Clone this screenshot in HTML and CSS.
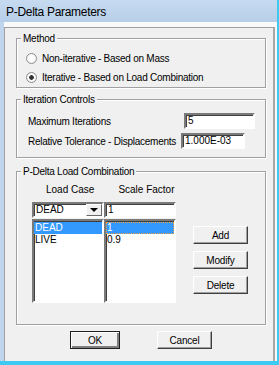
FILE: index.html
```html
<!DOCTYPE html>
<html lang="en">
<head>
    <meta charset="UTF-8">
    <title>P-Delta Parameters</title>
    <link rel="stylesheet" href="styles.css">
</head>
<body>
    <div class="window">
        <div class="titlebar">P-Delta Parameters</div>
        <div class="client">
            <div class="panel">
                <div class="group group-method">
                    <span class="group-title">Method</span>
                    <div class="radio-row">
                        <span class="radio"></span>
                        <span>Non-iterative - Based on Mass</span>
                    </div>
                    <div class="radio-row">
                        <span class="radio checked"></span>
                        <span>Iterative - Based on Load Combination</span>
                    </div>
                </div>

                <div class="group group-iter">
                    <span class="group-title">Iteration Controls</span>
                    <div class="field-row">
                        <span class="lbl lbl-max">Maximum Iterations</span>
                        <span class="textbox tb-max">5</span>
                    </div>
                    <div class="field-row">
                        <span class="lbl lbl-tol">Relative Tolerance - Displacements</span>
                        <span class="textbox tb-tol">1.000E-03</span>
                    </div>
                </div>

                <div class="group group-combo">
                    <span class="group-title">P-Delta Load Combination</span>
                    <div class="combo-layout">
                        <div class="combo-left">
                            <div class="col-heads">
                                <span class="head-case">Load Case</span>
                                <span class="head-scale">Scale Factor</span>
                            </div>
                            <div class="edit-row">
                                <div class="textbox combo">
                                    <span>DEAD</span>
                                    <span class="drop-btn"><span class="arrow"></span></span>
                                </div>
                                <span class="textbox scale-edit">1</span>
                            </div>
                            <div class="lists">
                                <ul class="listbox">
                                    <li class="selected">DEAD</li>
                                    <li>LIVE</li>
                                </ul>
                                <ul class="listbox">
                                    <li class="selected focus">1</li>
                                    <li>0.9</li>
                                </ul>
                            </div>
                        </div>
                        <div class="side-buttons">
                            <button class="btn btn-side">Add</button>
                            <button class="btn btn-side">Modify</button>
                            <button class="btn btn-side">Delete</button>
                        </div>
                    </div>
                </div>

                <div class="dialog-buttons">
                    <button class="btn btn-ok">OK</button>
                    <button class="btn btn-cancel">Cancel</button>
                </div>
            </div>
        </div>
    </div>
</body>
</html>
```

FILE: styles.css
```css
body {
    margin: 0;
    padding: 0;
    background-color: #ffffff;
    font-family: "Liberation Sans", Arial, sans-serif;
    font-size: 10px;
    letter-spacing: -0.25px;
    color: #000;
    white-space: nowrap;
}
.window {
    width: 279px;
    height: 365px;
    box-sizing: border-box;
    display: flex;
    flex-direction: column;
    background: #bfd5ec;
    border-right: 2px solid #3ccaf2;
    border-bottom: 4px solid #3ccaf2;
}
.titlebar {
    height: 22px;
    line-height: 24px;
    padding-left: 6px;
    font-size: 12px;
    letter-spacing: -0.3px;
    color: #000;
    background: linear-gradient(#c6dbf0, #b6cee8);
}
.client {
    flex: 1;
    margin-left: 4px;
    padding: 5px 2px 0 0;
    background: #f9f9f9;
    display: flex;
}
.panel {
    flex: 1;
    background: #f0f0f0;
    border: 1px solid #a0a0a0;
    border-right: 2px solid #a8a8a8;
    border-bottom: none;
}

/* group boxes */
.group {
    position: relative;
    margin: 10px 7px 0 11px;
    border: 1px solid #a0a0a0;
    box-shadow: 1px 1px 0 #fff, inset 1px 1px 0 #fff;
}
.group-title {
    position: absolute;
    top: -7px;
    left: 4px;
    padding: 0 2px;
    line-height: 13px;
    background: #f0f0f0;
}
.group-method {
    padding: 12px 0 3px 11px;
}
.group-iter {
    margin-top: 11px;
    padding: 13px 0 8px 11px;
}
.group-combo {
    margin-top: 13px;
    padding: 11px 0 21px 15px;
}

/* radios */
.radio-row {
    display: flex;
    align-items: center;
    height: 14px;
    margin-bottom: 5px;
}
.radio-row:last-child {
    margin-bottom: 0;
}
.radio {
    width: 11px;
    height: 11px;
    box-sizing: border-box;
    border: 1px solid #8f8f8f;
    border-radius: 50%;
    background: radial-gradient(circle, #fdfdfd 0 3px, #e6e6e6 6px);
    margin: 0 5px 0 -2px;
}
.radio.checked {
    background: radial-gradient(circle, #333 0 2px, #fdfdfd 2.6px 3px, #e6e6e6 6px);
}

/* text boxes */
.field-row {
    display: flex;
    align-items: center;
    height: 16px;
    margin-bottom: 4px;
}
.field-row:last-child {
    margin-bottom: 0;
}
.lbl-max {
    width: 156px;
}
.lbl-tol {
    width: 153px;
}
.textbox {
    box-sizing: border-box;
    height: 16px;
    line-height: 12px;
    padding-left: 2px;
    background: #fff;
    border: 2px solid;
    border-color: #7a7a7a #ffffff #ffffff #7a7a7a;
    box-shadow: inset 1px 1px 0 #404040;
    letter-spacing: 0;
}
.tb-max {
    width: 71px;
}
.tb-tol {
    width: 64px;
}

/* load combination */
.combo-layout {
    display: flex;
}
.col-heads {
    display: flex;
    height: 13px;
    line-height: 13px;
    margin-bottom: 6px;
    letter-spacing: 0;
}
.head-case {
    margin-left: 14px;
}
.head-scale {
    margin-left: 24px;
}
.edit-row {
    display: flex;
    margin-bottom: 1px;
}
.combo {
    width: 72px;
    display: flex;
    justify-content: space-between;
}
.scale-edit {
    width: 72px;
}
.drop-btn {
    width: 16px;
    height: 12px;
    box-sizing: border-box;
    background: #f0f0f0;
    border: 1px solid;
    border-color: #fff #696969 #696969 #fff;
    display: flex;
    align-items: center;
    justify-content: center;
}
.arrow {
    width: 0;
    height: 0;
    border-left: 4px solid transparent;
    border-right: 4px solid transparent;
    border-top: 4px solid #000;
}
.lists {
    display: flex;
}
.listbox {
    list-style: none;
    margin: 0;
    padding: 1px 0 0 0;
    width: 72px;
    height: 84px;
    box-sizing: border-box;
    background: #fff;
    border: 2px solid;
    border-color: #7a7a7a #ffffff #ffffff #7a7a7a;
    box-shadow: inset 1px 1px 0 #404040;
    letter-spacing: 0;
}
.listbox li {
    height: 12px;
    line-height: 12px;
    padding-left: 1px;
    margin-left: 0;
}
.listbox li.selected {
    background: #3399ff;
    color: #fff;
}
.listbox li.focus {
    outline: 1px dotted #f0a040;
    outline-offset: -1px;
}
.side-buttons {
    display: flex;
    flex-direction: column;
    gap: 7px;
    margin-left: 17px;
    padding-top: 43px;
}

/* buttons */
.btn {
    box-sizing: border-box;
    height: 18px;
    padding: 0;
    font-family: "Liberation Sans", Arial, sans-serif;
    font-size: 10px;
    letter-spacing: -0.2px;
    color: #000;
    background: #f0f0f0;
    border: 1px solid;
    border-color: #ffffff #404040 #404040 #ffffff;
    box-shadow: inset -1px -1px 0 #a0a0a0;
}
.btn-side {
    width: 55px;
}
.dialog-buttons {
    display: flex;
    margin: 6px 0 0 65px;
}
.btn-ok {
    width: 50px;
    border-color: #202020;
    box-shadow: inset 1px 1px 0 #fff, inset -2px -2px 0 #808080;
}
.btn-cancel {
    width: 55px;
    margin-left: 37px;
}
```
